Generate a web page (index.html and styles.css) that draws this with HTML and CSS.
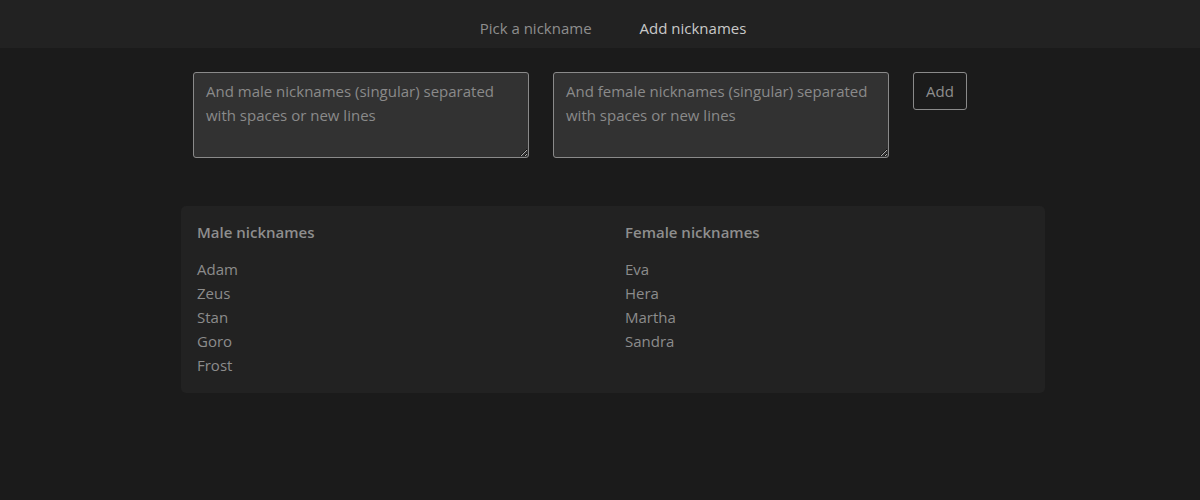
FILE: index.html
```html
<!DOCTYPE html>
<html lang="en">
<head>
<meta charset="utf-8">
<title>Nicknames</title>
<link rel="stylesheet" href="styles.css">
</head>
<body>
<header class="topbar">
  <nav class="nav">
    <a class="nav-link" href="#">Pick a nickname</a>
    <a class="nav-link active" href="#">Add nicknames</a>
  </nav>
</header>
<main class="page">
  <form class="add-form">
    <textarea class="input" placeholder="And male nicknames (singular) separated with spaces or new lines"></textarea>
    <textarea class="input" placeholder="And female nicknames (singular) separated with spaces or new lines"></textarea>
    <button class="btn" type="button">Add</button>
  </form>
  <section class="card">
    <div class="col">
      <h3 class="col-title">Male nicknames</h3>
      <ul class="list">
        <li>Adam</li>
        <li>Zeus</li>
        <li>Stan</li>
        <li>Goro</li>
        <li>Frost</li>
      </ul>
    </div>
    <div class="col">
      <h3 class="col-title">Female nicknames</h3>
      <ul class="list">
        <li>Eva</li>
        <li>Hera</li>
        <li>Martha</li>
        <li>Sandra</li>
      </ul>
    </div>
  </section>
</main>
</body>
</html>
```
FILE: styles.css
```css
* { box-sizing: border-box; }
html, body {
  margin: 0;
  padding: 0;
  background: #1b1b1b;
  font-family: "Open Sans", "Noto Sans", sans-serif;
  font-size: 15px;
  line-height: 24px;
  color: #8c8c8c;
}
.topbar {
  background: #222222;
  height: 48px;
}
.nav {
  width: 864px;
  margin: 0 155px 0 181px;
  display: flex;
  justify-content: center;
  gap: 48px;
  padding-top: 16px;
}
.nav-link {
  color: #8e8e8e;
  text-decoration: none;
}
.nav-link.active {
  color: #c9c9c9;
}
.page {
  width: 864px;
  margin: 0 155px 0 181px;
}
.add-form {
  display: flex;
  align-items: flex-start;
  gap: 24px;
  padding: 24px 12px 0;
}
.input {
  width: 336px;
  height: 86px;
  background: #323232;
  border: 1px solid #8a8a8a;
  border-radius: 3px;
  padding: 6px 12px;
  font: inherit;
  color: #c0c0c0;
  resize: vertical;
}
.input::placeholder {
  color: #8a8a8a;
}
.btn {
  background: transparent;
  border: 1px solid #8a8a8a;
  border-radius: 3px;
  color: #8e8e8e;
  font: inherit;
  padding: 6px 12px;
  height: 38px;
}
.card {
  margin-top: 48px;
  background: #222222;
  border-radius: 5px;
  padding: 16px;
  display: grid;
  grid-template-columns: 1fr 1fr;
  gap: 24px;
}
.col-title {
  margin: 0 0 15px;
  font-size: 15px;
  line-height: 20px;
  font-weight: 600;
  color: #8e8e8e;
}
.list {
  list-style: none;
  margin: 0;
  padding: 0;
}
.list li {
  line-height: 24px;
  color: #8c8c8c;
}
```
